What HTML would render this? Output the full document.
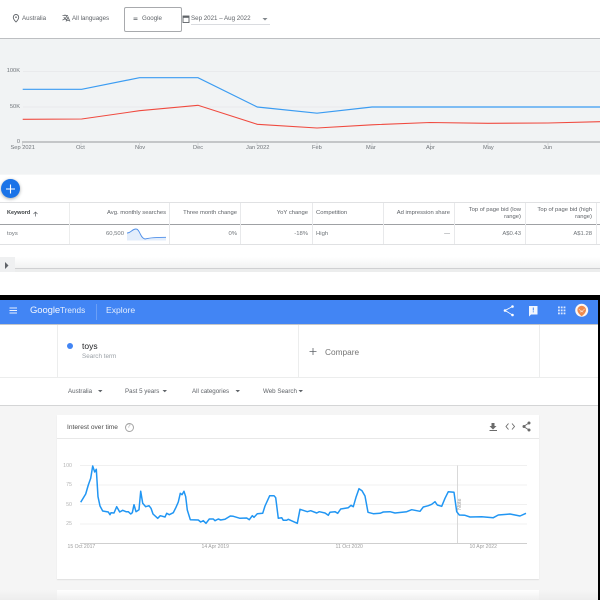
<!DOCTYPE html>
<html><head><meta charset="utf-8"><style>
html,body{margin:0;padding:0;width:600px;height:600px;overflow:hidden;background:#fff}
body{position:relative;font-family:"Liberation Sans",sans-serif;color:#5f6368}
.a{position:absolute}
.t{position:absolute;white-space:nowrap;line-height:1}
.x{position:absolute;white-space:nowrap;line-height:1;font-size:5.700px;color:#70757a}
.h{position:absolute;white-space:nowrap;line-height:1;font-size:5.850px}
.n{position:absolute;white-space:nowrap;line-height:1;font-size:5.900px;color:#70757a}
.tb{position:absolute;white-space:nowrap;line-height:1;font-size:6.200px;top:16.200px}
.f{position:absolute;white-space:nowrap;line-height:1;font-size:6.200px;top:388.700px;color:#5f6368}
.yy{position:absolute;white-space:nowrap;line-height:1;font-size:5.300px;color:#b5b5b5;right:528px}
.d{position:absolute;white-space:nowrap;line-height:1;font-size:5.100px;color:#9e9e9e;top:545.200px}
svg{position:absolute;overflow:visible}
</style></head><body>

<!-- top toolbar -->
<svg style="left:0;top:0" width="600" height="40">
<path d="M16 14.500a2.700 2.700 0 0 1 2.700 2.700c0 2-2.700 4.800-2.700 4.800s-2.700-2.800-2.700-4.800a2.700 2.700 0 0 1 2.700-2.700z" fill="none" stroke="#5f6368" stroke-width=".9"/>
<circle cx="16" cy="17.200" r=".8" fill="#5f6368"/>
<path d="M62.500 15.500h5.500M65 14.500v1M67 15.500c-.5 2-2 3.600-4.500 4.600M63.800 17c.6 1.300 1.800 2.300 3 3M66 21.500l2-4.500 2 4.500M66.600 20.300h2.800" fill="none" stroke="#5f6368" stroke-width=".8"/>
<path d="M133.500 18h4M133.500 19.600h4" stroke="#5f6368" stroke-width=".8"/>
<rect x="183" y="16" width="6" height="6.500" fill="none" stroke="#5f6368" stroke-width=".9"/><rect x="183" y="16" width="6" height="1.800" fill="#5f6368"/>
<path d="M262.500 18h5l-2.500 2.500z" fill="#80868b"/>
</svg>
<div class="tb" style="left:22px">Australia</div>
<div class="tb" style="left:72px">All languages</div>
<div class="a" style="left:124px;top:7px;width:55.500px;height:22.500px;border:1px solid #a8aaad;border-radius:2px"></div>
<div class="tb" style="left:142px">Google</div>
<div class="tb" style="left:191px">Sep 2021 – Aug 2022</div>
<div class="a" style="left:191px;top:24px;width:79px;height:1px;background:#dadce0"></div>
<div class="a" style="left:0;top:38px;width:600px;height:1px;background:#bdbfc2"></div>

<!-- gray chart area -->
<div class="a" style="left:0;top:39px;width:600px;height:135px;background:#f1f3f4"></div>
<div class="a" style="left:0;top:174px;width:600px;height:1px;background:#f6f7f7"></div>
<svg style="left:0;top:0" width="600" height="175">
<path d="M23 71.500H600M23 107H600" stroke="#e6e7e9" stroke-width=".8"/>
<path d="M22 142H600" stroke="#b5b7ba" stroke-width="1.400"/>
<path d="M22.500 143v3M81 143v3M139.500 143v3M198 143v3M257 143v3M317 143v3M372 143v3M430.500 143v3M488 143v3M548 143v3" stroke="#c4c6c9" stroke-width=".6"/>
<polyline points="22.700,89.300 81.700,89.300 139.500,77.700 198,77.700 257.300,107 317,113.200 372,107 600,107" fill="none" stroke="#3b9cf2" stroke-width="1.200"/>
<polyline points="22.700,119.300 81.700,119 139.500,110.700 198,105.300 257.300,124.300 317,128 372,124.800 430,122.500 488,123.300 548,123 600,121.700" fill="none" stroke="#f04a3f" stroke-width="1.050"/>
</svg>
<div class="x" style="right:580px;top:69.200px">100K</div>
<div class="x" style="right:580px;top:104.700px">50K</div>
<div class="x" style="right:580px;top:140px">0</div>
<div class="x" style="left:10.500px;top:146.200px">Sep 2021</div>
<div class="x" style="left:76px;top:146.200px">Oct</div>
<div class="x" style="left:135px;top:146.200px">Nov</div>
<div class="x" style="left:193px;top:146.200px">Dec</div>
<div class="x" style="left:246px;top:146.200px">Jan 2022</div>
<div class="x" style="left:312px;top:146.200px">Feb</div>
<div class="x" style="left:366px;top:146.200px">Mar</div>
<div class="x" style="left:426px;top:146.200px">Apr</div>
<div class="x" style="left:483px;top:146.200px">May</div>
<div class="x" style="left:543px;top:146.200px">Jun</div>

<!-- FAB -->
<div class="a" style="left:1px;top:179px;width:19px;height:19px;border-radius:50%;background:#1a73e8;box-shadow:0 1px 3px rgba(60,64,67,.45)"></div>
<svg style="left:0;top:0" width="30" height="200"><path d="M10.500 184.500v9M6 189h9" stroke="#fff" stroke-width="1.100"/></svg>

<!-- table -->
<div class="a" style="left:0;top:202px;width:600px;height:1px;background:#e0e1e3"></div>
<div class="a" style="left:0;top:224px;width:600px;height:1px;background:#9fa1a4"></div>
<div class="a" style="left:0;top:244px;width:600px;height:1px;background:#e0e1e3"></div>
<div class="a" style="left:69px;top:203px;width:1px;height:41px;background:#eceded"></div>
<div class="a" style="left:169px;top:203px;width:1px;height:41px;background:#e8e9eb"></div>
<div class="a" style="left:240px;top:203px;width:1px;height:41px;background:#e8e9eb"></div>
<div class="a" style="left:312px;top:203px;width:1px;height:41px;background:#e8e9eb"></div>
<div class="a" style="left:383px;top:203px;width:1px;height:41px;background:#e8e9eb"></div>
<div class="a" style="left:454px;top:203px;width:1px;height:41px;background:#e8e9eb"></div>
<div class="a" style="left:525px;top:203px;width:1px;height:41px;background:#e8e9eb"></div>
<div class="a" style="left:596px;top:203px;width:1px;height:41px;background:#e8e9eb"></div>
<div class="h" style="left:7px;top:210.800px;font-size:5.500px;font-weight:bold;color:#3c4043">Keyword</div>
<svg style="left:0;top:0" width="60" height="230"><path d="M35.500 216.500v-4.500M33.500 214l2-2 2 2" fill="none" stroke="#5f6368" stroke-width=".7"/></svg>
<div class="h" style="right:434px;top:210.800px">Avg. monthly searches</div>
<div class="h" style="right:363px;top:210.800px">Three month change</div>
<div class="h" style="right:292px;top:210.800px">YoY change</div>
<div class="h" style="left:316px;top:210.800px">Competition</div>
<div class="h" style="right:150px;top:210.800px">Ad impression share</div>
<div class="h" style="right:79px;top:206.800px;text-align:right;line-height:7px">Top of page bid (low<br>range)</div>
<div class="h" style="right:8px;top:206.800px;text-align:right;line-height:7px">Top of page bid (high<br>range)</div>
<div class="n" style="left:7px;top:232px">toys</div>
<div class="n" style="right:476px;top:232px">60,500</div>
<svg style="left:0;top:0" width="180" height="245">
<path d="M127 233C131 233 132 229 136 229C140 229 140 238 145 239C147 239 147 237.300 166 237.300V240.500H127Z" fill="#e3edfb"/>
<path d="M127 233C131 233 132 229 136 229C140 229 140 238 145 239C147 239 147 237.300 166 237.300" fill="none" stroke="#4f8fe8" stroke-width=".9"/>
</svg>
<div class="n" style="right:363px;top:232px">0%</div>
<div class="n" style="right:292px;top:232px">-18%</div>
<div class="n" style="left:316px;top:232px">High</div>
<div class="n" style="right:150px;top:232px">—</div>
<div class="n" style="right:79px;top:232px">A$0.43</div>
<div class="n" style="right:8px;top:232px">A$1.28</div>

<!-- footer gradient / scrollbar -->
<div class="a" style="left:15px;top:250px;width:585px;height:18px;background:linear-gradient(#fff 40%,#f1f2f2)"></div>
<div class="a" style="left:15px;top:267.500px;width:585px;height:1.500px;background:#cfd0d2"></div>
<div class="a" style="left:0;top:269px;width:600px;height:3px;background:#eceded"></div>
<div class="a" style="left:0;top:257px;width:15px;height:15px;background:#eff0f1"></div>
<svg style="left:0;top:0" width="20" height="275"><path d="M5 262l3.500 3.500L5 269z" fill="#5f6368"/></svg>

<!-- black divider -->
<div class="a" style="left:0;top:295px;width:600px;height:5px;background:#000"></div>
<div class="a" style="left:598px;top:295px;width:2px;height:305px;background:#000"></div>

<!-- Trends header -->
<div class="a" style="left:0;top:300px;width:598px;height:24px;background:#4285f4"></div>
<div class="a" style="left:0;top:324px;width:598px;height:1px;background:#c4c6c8"></div>
<svg style="left:0;top:0" width="20" height="320"><path d="M9.500 308h7.500M9.500 310.500h7.500M9.500 313h7.500" stroke="#e8f0fe" stroke-width="1.100"/></svg>
<div class="t" style="left:30px;top:306px;font-size:9.500px;color:#f1f5fe;letter-spacing:-.1px">Google</div>
<div class="t" style="left:60px;top:307px;font-size:8.200px;color:#e3edfd">Trends</div>
<div class="a" style="left:96px;top:304px;width:1px;height:16px;background:#6b9ff6"></div>
<div class="t" style="left:106px;top:306px;font-size:8.600px;color:#e3edfd">Explore</div>

<svg style="left:490px;top:292px" width="110" height="40">
<g transform="translate(1.500 0)" fill="#fff"><path d="M21 14.500L13.500 18.500L21 23" fill="none" stroke="#fff" stroke-width=".8"/><circle cx="21" cy="14.500" r="1.300"/><circle cx="13.500" cy="18.500" r="1.300"/><circle cx="21" cy="23" r="1.300"/></g>
<path d="M39 14h8.500v8.500h-6.500l-2 2z" fill="#f2f6fe"/><rect x="42.800" y="15.500" width="1" height="3" fill="#4285f4"/><rect x="42.800" y="19.300" width="1" height="1" fill="#4285f4"/>
<g fill="#dbe7fd"><rect x="68" y="14.500" width="1.800" height="1.800"/><rect x="70.800" y="14.500" width="1.800" height="1.800"/><rect x="73.600" y="14.500" width="1.800" height="1.800"/><rect x="68" y="17.500" width="1.800" height="1.800"/><rect x="70.800" y="17.500" width="1.800" height="1.800"/><rect x="73.600" y="17.500" width="1.800" height="1.800"/><rect x="68" y="20.500" width="1.800" height="1.800"/><rect x="70.800" y="20.500" width="1.800" height="1.800"/><rect x="73.600" y="20.500" width="1.800" height="1.800"/></g>
<g transform="translate(-.3 1.300)">
<circle cx="92" cy="17" r="6.500" fill="#fdf6f0"/>
<path d="M92 23c-2.500-2-4.300-4.200-4.300-6.300a4.300 4.300 0 0 1 8.600 0C96.300 18.800 94.500 21 92 23z" fill="#ee8a4f"/>
<path d="M89 15.500l3 3 3-3M90.500 19l1.500-1.500 1.500 1.500" fill="none" stroke="#fde3d0" stroke-width=".6"/>
</g>
</svg>

<!-- search terms -->
<div class="a" style="left:57px;top:325px;width:1px;height:52px;background:#eceded"></div>
<div class="a" style="left:298px;top:325px;width:1px;height:52px;background:#eceded"></div>
<div class="a" style="left:539px;top:325px;width:1px;height:52px;background:#eceded"></div>
<div class="a" style="left:0;top:377px;width:598px;height:1px;background:#eceded"></div>
<div class="a" style="left:67px;top:343px;width:6px;height:6px;border-radius:50%;background:#4285f4"></div>
<div class="t" style="left:82px;top:342px;font-size:8.500px;color:#202124">toys</div>
<div class="t" style="left:82px;top:353.500px;font-size:6.300px;color:#9aa0a6">Search term</div>
<svg style="left:0;top:0" width="330" height="360"><path d="M313 348v7M309.500 351.500h7" stroke="#5f6368" stroke-width=".8"/></svg>
<div class="t" style="left:325px;top:348px;font-size:8.300px;color:#757575">Compare</div>

<!-- filters -->
<div class="f" style="left:68px">Australia</div>
<div class="f" style="left:125px">Past 5 years</div>
<div class="f" style="left:192px">All categories</div>
<div class="f" style="left:263px">Web Search</div>
<svg style="left:0;top:0" width="320" height="400"><path d="M98 390h4.500l-2.250 2.200zM162.500 390h4.500l-2.250 2.200zM235.500 390h4.500l-2.250 2.200zM298.500 390h4.500l-2.250 2.200z" fill="#5f6368"/></svg>

<!-- gray bottom -->
<div class="a" style="left:0;top:405px;width:598px;height:1px;background:#d4d5d6"></div>
<div class="a" style="left:0;top:406px;width:598px;height:194px;background:#f5f5f5"></div>

<!-- card -->
<div class="a" style="left:57px;top:415px;width:482px;height:164px;background:#fff;box-shadow:0 1px 1px rgba(0,0,0,.09)"></div>
<div class="a" style="left:57px;top:438px;width:482px;height:1px;background:#e8e8e8"></div>
<div class="t" style="left:67px;top:424.500px;font-size:6.600px;color:#4a4a4a">Interest over time</div>
<div class="a" style="left:125px;top:422.500px;width:7px;height:7px;border:.8px solid #a5a5a5;border-radius:50%"></div>
<div class="t" style="left:127.200px;top:424px;font-size:6px;color:#a0a0a0">?</div>
<svg style="left:0;top:0" width="600" height="600">
<path d="M492 423h3v3h2l-3.500 3.500-3.500-3.500h2z" fill="#6b6b6b" transform="translate(-.5 0)"/><rect x="489.500" y="430" width="7.500" height="1" fill="#6b6b6b"/>
<path d="M508.500 423.500l-2.500 3 2.500 3M512 423.500l2.500 3-2.500 3" fill="none" stroke="#6b6b6b" stroke-width=".9"/>
<path d="M529 423l-5.500 3.500 5.500 3.500" fill="none" stroke="#6b6b6b" stroke-width=".9"/><circle cx="529" cy="423" r="1.500" fill="#6b6b6b"/><circle cx="524" cy="426.500" r="1.500" fill="#6b6b6b"/><circle cx="529" cy="430" r="1.500" fill="#6b6b6b"/>
<path d="M80 465.500H527M80 485H527M80 504.500H527M80 524H527" stroke="#f0f0f0" stroke-width="1"/>
<path d="M80 543.500H527" stroke="#cfcfcf" stroke-width=".9"/>
<path d="M457.500 465.500V543" stroke="#d0d0d0" stroke-width=".8"/>
<polyline fill="none" stroke="#2196f3" stroke-width="1.500" stroke-linejoin="round" points="80.700,502.300 85.700,494 88.300,485 90.700,478.300 92.700,466 94.700,472 96.300,469.300 98,496.700 100,506 102.700,511 108.300,512 110,514.700 111,512.700 114,513 116.700,506.700 119.700,512 122.700,510.300 126,511.700 128.300,511.700 130.700,514 132.300,512.700 134,504.700 136,511.700 139,509.700 140.700,491.300 142.700,503.300 145.700,506.700 149,505.700 151,508.300 153,514 157.700,518.300 160.300,515.700 165,517 166.700,513.300 169.300,514.700 173.300,512.700 176,507.300 178.300,502 180.300,493.300 182,494.700 184,491.300 185.700,496.700 187.300,510 190.300,519.700 198.300,520 200.700,522 203.300,520.700 206,523.300 209.300,519 213.300,519 215,520.700 218.300,519 220.700,520 225,519.300 230.300,516 233.300,516.300 240,518.300 246.700,518 249.300,519.700 252.300,515.700 254,517.300 257.300,513.700 262.700,513.300 265,506 269.700,495.700 274,495.700 275.700,497.700 278.300,518.300 281.700,517.700 283.300,520.300 286.700,520.300 288.300,519.300 297.300,523.300 300,509.300 307.300,511.700 310.700,510.700 316.700,513 319.300,511.700 325,513 328.300,515.300 330,512.300 335,511.700 337.700,513.300 340.700,509 348.300,507.700 351,505.300 353.300,506.700 356,497.300 359,488.700 362,490.700 365,496 368,512.300 373.300,513.700 380,513.300 383.300,512 390,511.700 395,513 406.700,511.700 411.700,509.700 420,511.300 423.300,507 428.300,505.700 431.700,504.300 435,501.700 437.300,505 441.700,506.300 445,498.300 448.300,491.700 454,492.300 456.700,511.700 459.300,515 465,515.300 470,517 481.700,516.700 493.300,517.700 498.300,515 510,514 520,516 526,513.300"/>
</svg>
<div class="t" style="left:458px;top:510px;font-size:5.500px;color:#9e9e9e;transform:rotate(-90deg);transform-origin:left top">Note</div>
<div class="yy" style="top:463.700px">100</div>
<div class="yy" style="top:483.200px">75</div>
<div class="yy" style="top:502.700px">50</div>
<div class="yy" style="top:522.200px">25</div>
<div class="d" style="left:67.500px">15 Oct 2017</div>
<div class="d" style="left:201.500px">14 Apr 2019</div>
<div class="d" style="left:335.500px">11 Oct 2020</div>
<div class="d" style="left:469.500px">10 Apr 2022</div>

<!-- next card -->
<div class="a" style="left:57px;top:590px;width:482px;height:10px;background:#fff"></div>
<div class="a" style="left:0;top:590px;width:598px;height:10px;background:linear-gradient(rgba(245,245,245,0),rgba(235,235,235,.8))"></div>
</body></html>
